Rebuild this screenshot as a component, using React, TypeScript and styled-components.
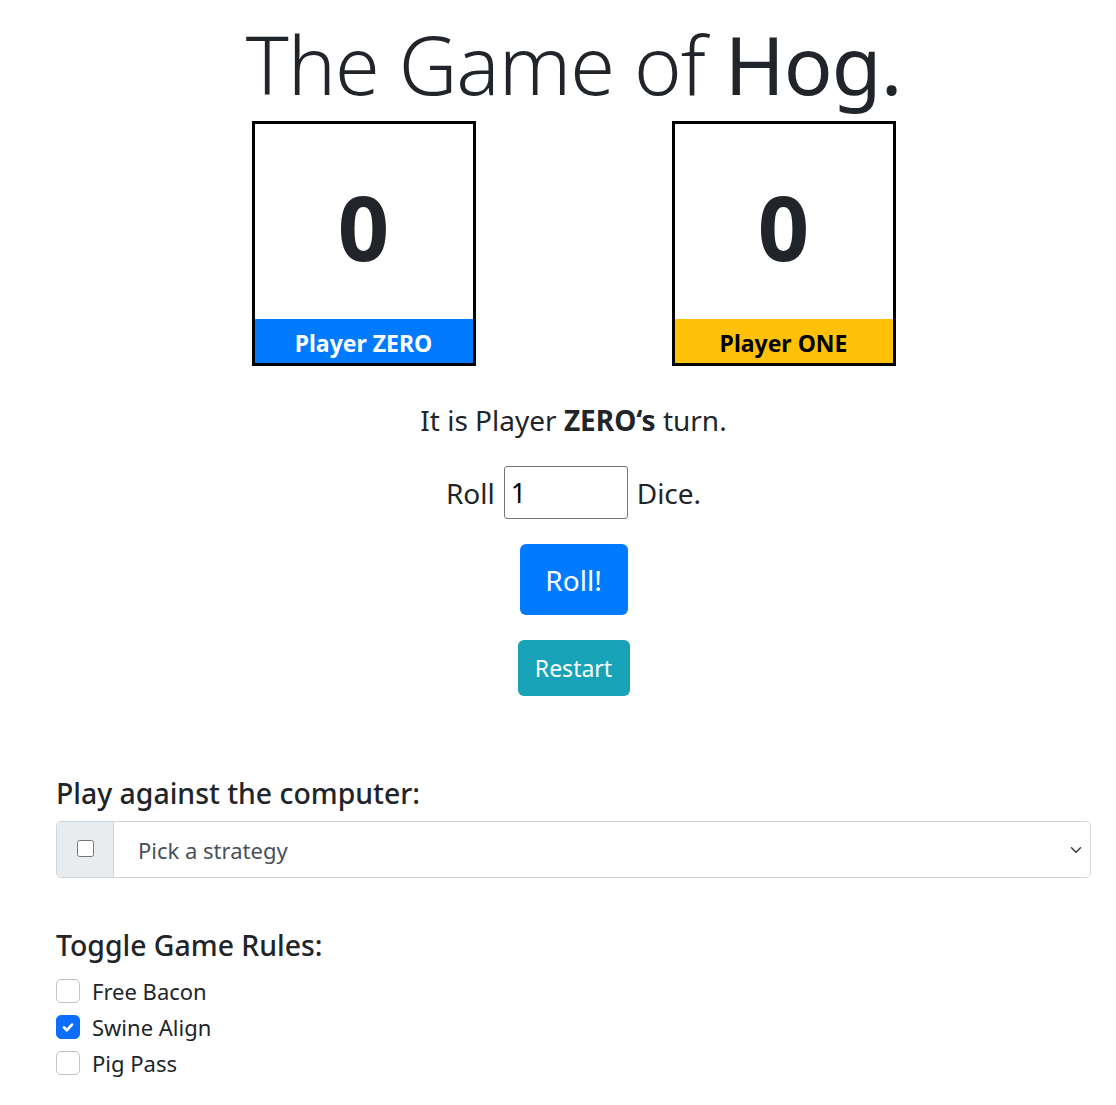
import { useState } from "react";
import styled, { createGlobalStyle } from "styled-components";

const GlobalStyle = createGlobalStyle`
  html, body {
    margin: 0;
    padding: 0;
    background: #fff;
  }
  body {
    font-family: "Noto Sans", "Open Sans", Arial, sans-serif;
    color: #212529;
  }
`;

const Page = styled.div`
  padding: 0 25px 40px 56px;
`;

const Title = styled.h1`
  margin: 10px 0 3px;
  text-align: center;
  font-size: 81px;
  font-weight: 300;
  line-height: 108px;
  letter-spacing: -1px;
  b {
    font-weight: 400;
  }
`;

const Scores = styled.div`
  display: flex;
  justify-content: center;
  gap: 196px;
`;

const ScoreBox = styled.div`
  width: 218px;
  border: 3px solid #000;
  display: flex;
  flex-direction: column;
`;

const ScoreValue = styled.div`
  height: 195px;
  display: flex;
  align-items: center;
  justify-content: center;
  font-size: 90px;
  font-weight: 700;
  padding-top: 8px;
  box-sizing: border-box;
`;

const ScoreLabel = styled.div<{ $bg: string; $fg: string }>`
  height: 44px;
  background: ${(p) => p.$bg};
  color: ${(p) => p.$fg};
  display: flex;
  align-items: center;
  justify-content: center;
  font-size: 23px;
  font-weight: 700;
  padding-top: 3px;
  box-sizing: border-box;
`;

const Turn = styled.p`
  margin: 36px 0 0;
  text-align: center;
  font-size: 28px;
  line-height: 36px;
  b {
    font-weight: 700;
  }
`;

const RollRow = styled.div`
  margin-top: 28px;
  display: flex;
  justify-content: center;
  align-items: center;
  gap: 9px;
  font-size: 28px;
`;

const DiceInput = styled.input`
  width: 124px;
  height: 53px;
  box-sizing: border-box;
  border: 1px solid #767676;
  border-radius: 3px;
  font-family: inherit;
  font-size: 27px;
  padding: 0 6px;
  color: #000;
`;

const Button = styled.button<{ $bg: string; $w: number; $h: number; $fs: number }>`
  display: block;
  margin: 0 auto;
  width: ${(p) => p.$w}px;
  height: ${(p) => p.$h}px;
  background: ${(p) => p.$bg};
  color: #fff;
  border: none;
  border-radius: 6px;
  font-family: inherit;
  font-size: ${(p) => p.$fs}px;
  padding: 0;
`;

const ButtonStack = styled.div`
  margin-top: 25px;
  display: flex;
  flex-direction: column;
  gap: 25px;
`;

const Heading = styled.h4`
  margin: 0 0 10px;
  font-size: 28.4px;
  font-weight: 500;
  line-height: 36px;
`;

const Section = styled.section<{ $top: number }>`
  margin-top: ${(p) => p.$top}px;
`;

const InputGroup = styled.div`
  display: flex;
  height: 57px;
  border: 1px solid #ced4da;
  border-radius: 5px;
  overflow: hidden;
  box-sizing: border-box;
`;

const Prepend = styled.div`
  width: 56px;
  background: #e9ecef;
  border-right: 1px solid #ced4da;
  display: flex;
  align-items: center;
  justify-content: center;
  input {
    width: 17px;
    height: 17px;
    margin: 0 0 2px;
  }
`;

const Select = styled.select`
  flex: 1;
  border: none;
  appearance: none;
  background: #fff;
  font-family: inherit;
  font-size: 22px;
  color: #495057;
  padding: 0 24px;
  background-image: url("data:image/svg+xml,%3csvg xmlns='http://www.w3.org/2000/svg' viewBox='0 0 16 16'%3e%3cpath fill='none' stroke='%23343a40' stroke-linecap='round' stroke-linejoin='round' stroke-width='2' d='M2 5l6 6 6-6'/%3e%3c/svg%3e");
  background-repeat: no-repeat;
  background-position: right 6px center;
  background-size: 16px 12px;
  outline: none;
`;

const CheckRow = styled.label`
  display: flex;
  align-items: center;
  gap: 12px;
  height: 36px;
  font-size: 22px;
`;

const Box = styled.span<{ $on: boolean }>`
  width: 24px;
  height: 24px;
  box-sizing: border-box;
  border-radius: 5px;
  border: 1px solid ${(p) => (p.$on ? "#0d6efd" : "#bfc4c9")};
  background: ${(p) => (p.$on ? "#0d6efd" : "#fff")};
  display: flex;
  align-items: center;
  justify-content: center;
`;

const rules = ["Free Bacon", "Swine Align", "Pig Pass"];

export default function App() {
  const [dice, setDice] = useState("1");
  const [on, setOn] = useState<Record<string, boolean>>({ "Swine Align": true });

  return (
    <Page>
      <GlobalStyle />
      <Title>
        The Game of <b>Hog.</b>
      </Title>
      <Scores>
        <ScoreBox>
          <ScoreValue>0</ScoreValue>
          <ScoreLabel $bg="#007bff" $fg="#fff">Player ZERO</ScoreLabel>
        </ScoreBox>
        <ScoreBox>
          <ScoreValue>0</ScoreValue>
          <ScoreLabel $bg="#ffc107" $fg="#000">Player ONE</ScoreLabel>
        </ScoreBox>
      </Scores>
      <Turn>
        It is Player <b>ZERO‘s</b> turn.
      </Turn>
      <RollRow>
        Roll
        <DiceInput value={dice} onChange={(e) => setDice(e.target.value)} />
        Dice.
      </RollRow>
      <ButtonStack>
        <Button $bg="#007bff" $w={108} $h={71} $fs={28}>Roll!</Button>
        <Button $bg="#17a2b8" $w={112} $h={56} $fs={23}>Restart</Button>
      </ButtonStack>

      <Section $top={79}>
        <Heading>Play against the computer:</Heading>
        <InputGroup>
          <Prepend>
            <input type="checkbox" />
          </Prepend>
          <Select defaultValue="">
            <option value="">Pick a strategy</option>
          </Select>
        </InputGroup>
      </Section>

      <Section $top={49}>
        <Heading>Toggle Game Rules:</Heading>
        {rules.map((r) => (
          <CheckRow key={r} onClick={() => setOn({ ...on, [r]: !on[r] })}>
            <Box $on={!!on[r]}>
              {on[r] && (
                <svg width="16" height="16" viewBox="0 0 20 20">
                  <path d="M5 10.5l3.5 3.5 6.5-7" fill="none" stroke="#fff" strokeWidth="3.4" strokeLinecap="round" strokeLinejoin="round" />
                </svg>
              )}
            </Box>
            {r}
          </CheckRow>
        ))}
      </Section>
    </Page>
  );
}
